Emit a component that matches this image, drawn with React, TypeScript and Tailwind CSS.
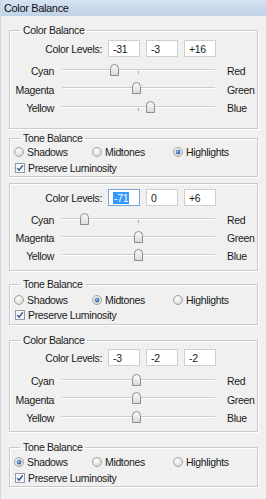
const font = { fontFamily: '"Liberation Sans", Arial, sans-serif' };

function Radio({ checked }: { checked?: boolean }) {
  return (
    <svg width="10" height="10" viewBox="0 0 10 10" className="shrink-0">
      <defs>
        <radialGradient id="rg" cx="40%" cy="35%" r="70%">
          <stop offset="0%" stopColor="#ffffff" />
          <stop offset="100%" stopColor="#d6d6d6" />
        </radialGradient>
        <radialGradient id="rb" cx="40%" cy="35%" r="70%">
          <stop offset="0%" stopColor="#8fc2ee" />
          <stop offset="100%" stopColor="#1c4f86" />
        </radialGradient>
      </defs>
      <circle cx="5" cy="5" r="4.5" fill="url(#rg)" stroke="#a3a3a3" />
      {checked && <circle cx="5" cy="5" r="2.4" fill="url(#rb)" />}
    </svg>
  );
}

function Checkbox() {
  return (
    <svg width="10" height="10" viewBox="0 0 10 10" className="shrink-0">
      <rect x="0.5" y="0.5" width="9" height="9" fill="#f4f6fa" stroke="#8f9aa8" />
      <path d="M2.3 5.1 L4.1 7.2 L7.8 2.4" fill="none" stroke="#2a4f95" strokeWidth="1.4" />
    </svg>
  );
}

function Thumb() {
  return (
    <svg width="9" height="12" viewBox="0 0 9 12">
      <defs>
        <linearGradient id="tg" x1="0" y1="0" x2="0" y2="1">
          <stop offset="0%" stopColor="#fbfbfb" />
          <stop offset="100%" stopColor="#d9d9d9" />
        </linearGradient>
      </defs>
      <path d="M0.5 11.5 V4.5 Q0.5 0.5 4.5 0.5 Q8.5 0.5 8.5 4.5 V11.5 Z" fill="url(#tg)" stroke="#8c8c8c" />
    </svg>
  );
}

function SliderRow({ left, right, value, className }: { left: string; right: string; value: number; className: string }) {
  const x = 76.5 + (value / 100) * 76.5;
  return (
    <div className={`flex items-center ${className}`}>
      <div className="w-[44px] text-right">{left}</div>
      <div className="relative ml-[8px] h-full w-[153px]">
        <div className="absolute left-0 right-0 top-[7px] h-[2px] border-t border-[#cdcdcd] border-b border-b-white" />
        <div className="absolute left-[76px] top-[9px] h-[3px] w-px bg-[#b0b0b0]" />
        <div className="absolute top-[2px]" style={{ left: x - 4.5 }}>
          <Thumb />
        </div>
      </div>
      <div className="ml-[12px]">{right}</div>
    </div>
  );
}

function Levels({ values, selected, className }: { values: string[]; selected?: boolean; className: string }) {
  return (
    <div className={`flex items-center ${className}`}>
      <div className="w-[92px] text-right">Color Levels:</div>
      <div className="ml-[6px] flex gap-[6px]">
        {values.map((v, i) => (
          <div
            key={i}
            className={`flex h-[17px] w-[32px] items-center bg-white pl-[4px] border ${
              selected && i === 0 ? "border-[#7aa7d6]" : "border-[#cfcfcf]"
            }`}
          >
            {selected && i === 0 ? <span className="bg-[#3399ff] px-px leading-[12px] text-white">{v}</span> : v}
          </div>
        ))}
      </div>
    </div>
  );
}

const box = "ml-[8px] mr-[8px] border border-[#cacaca] shadow-[inset_1px_1px_0_#ffffff,1px_1px_0_#ffffff] min-w-0";

function Legend({ children }: { children: string }) {
  return <legend className="ml-[10px] px-[3px] leading-[12px]">{children}</legend>;
}

function ToneBalance({ pick, className, pad, gap }: { pick: number; className: string; pad: string; gap: string }) {
  return (
    <fieldset className={`${box} ${className}`}>
      <Legend>Tone Balance</Legend>
      <div className={pad}>
        <div className="flex h-[14px] items-center pl-[4px]">
          {["Shadows", "Midtones", "Highlights"].map((t, i) => (
            <div key={t} className={`flex items-center gap-[3px] ${i === 0 ? "w-[78px]" : i === 1 ? "w-[81px]" : ""}`}>
              <Radio checked={pick === i} />
              <span>{t}</span>
            </div>
          ))}
        </div>
        <div className={`flex h-[14px] items-center gap-[3px] pl-[5px] ${gap}`}>
          <Checkbox />
          <span>Preserve Luminosity</span>
        </div>
      </div>
    </fieldset>
  );
}

export default function App() {
  return (
    <div
      className="h-[499px] w-[266px] overflow-hidden border-l border-[#c9d9ea] bg-[#f0f0f0] text-[10.5px] leading-[12px] tracking-[-0.35px] text-[#1a1a1a]"
      style={font}
    >
      <div className="flex h-[16px] items-center bg-gradient-to-b from-[#d6e3f1] to-[#bfd2e7] pl-[3px] text-[11px] text-[#111]">
        Color Balance
      </div>

      <fieldset className={`${box} mt-[8px]`}>
        <Legend>Color Balance</Legend>
        <div className="pb-[11px] pt-[4px]">
          <Levels values={["-31", "-3", "+16"]} className="" />
          <SliderRow left="Cyan" right="Red" value={-31} className="mt-[5px] h-[18px]" />
          <SliderRow left="Magenta" right="Green" value={-3} className="h-[19px]" />
          <SliderRow left="Yellow" right="Blue" value={16} className="h-[18px]" />
        </div>
      </fieldset>
      <ToneBalance pick={2} className="mt-[3px]" pad="pb-[1px] pt-px" gap="mt-[2px]" />

      <fieldset className={`${box} mt-[6px]`}>
        <div className="pb-[5px] pt-[5px]">
          <Levels values={["-71", "0", "+6"]} selected className="" />
          <SliderRow left="Cyan" right="Red" value={-71} className="mt-[5px] h-[18px]" />
          <SliderRow left="Magenta" right="Green" value={0} className="h-[18px]" />
          <SliderRow left="Yellow" right="Blue" value={0} className="h-[18px]" />
        </div>
      </fieldset>
      <ToneBalance pick={1} className="mt-[7px]" pad="pb-[2px] pt-[3px]" gap="mt-px" />

      <fieldset className={`${box} mt-[9px]`}>
        <Legend>Color Balance</Legend>
        <div className="pb-[4px] pt-[3px]">
          <Levels values={["-3", "-2", "-2"]} className="" />
          <SliderRow left="Cyan" right="Red" value={-3} className="mt-[6px] h-[18px]" />
          <SliderRow left="Magenta" right="Green" value={-3} className="h-[19px]" />
          <SliderRow left="Yellow" right="Blue" value={-3} className="h-[18px]" />
        </div>
      </fieldset>
      <ToneBalance pick={0} className="mt-[9px]" pad="pb-px pt-[2px]" gap="mt-[2px]" />
    </div>
  );
}
